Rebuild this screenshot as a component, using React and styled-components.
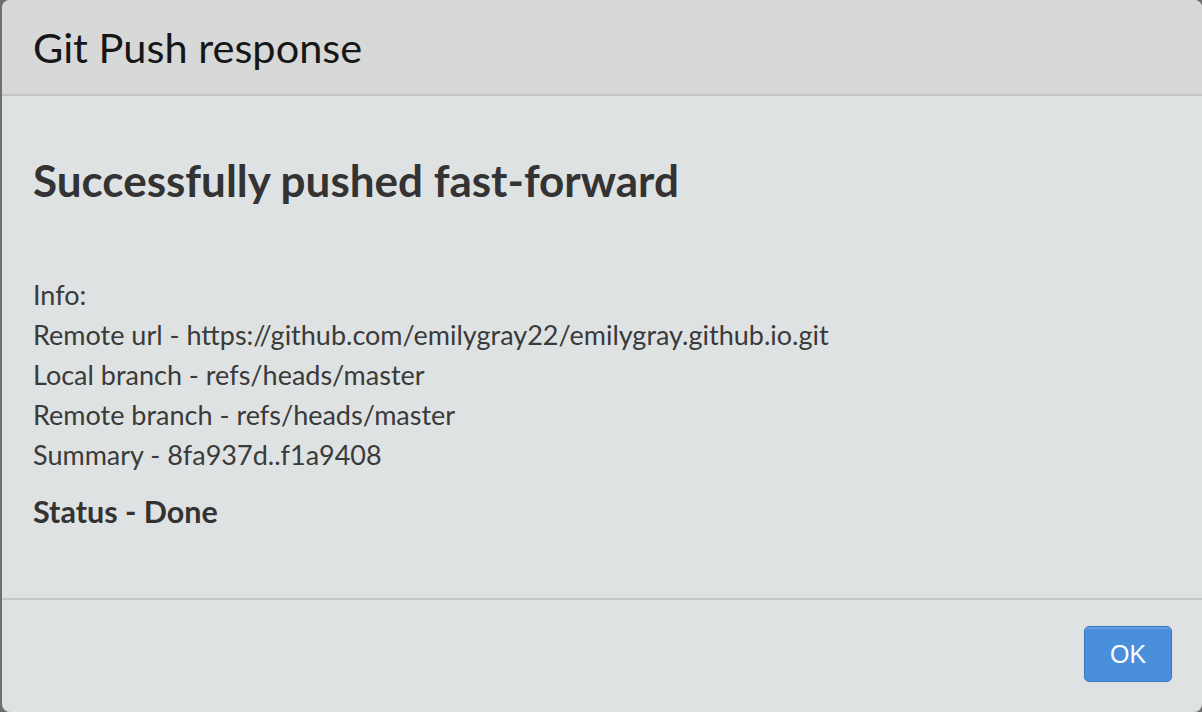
import React from "react";
import styled, { createGlobalStyle } from "styled-components";

const GlobalStyle = createGlobalStyle`
html, body {
  margin: 0;
  padding: 0;
  background: #6f6f72;
}
body {
  font-family: Lato, "Open Sans", "Liberation Sans", sans-serif;
  overflow: hidden;
}
`;

const Backdrop = styled.div`
width: 1202px;
height: 712px;
padding-left: 2px;
box-sizing: border-box;
`;

const Modal = styled.div`
height: 712px;
display: flex;
flex-direction: column;
background: #dfe2e3;
border-radius: 8px;
overflow: hidden;
`;

const Header = styled.div`
height: 94px;
display: flex;
align-items: center;
padding: 0 31px;
background: #d7d8d8;
border-bottom: 2px solid #c5c6c7;
`;

const Title = styled.h3`
margin: 0;
font-size: 41.5px;
font-weight: 400;
color: #161616;
`;

const Body = styled.div`
flex: 1;
padding: 0 31px;
color: #333;
`;

const Heading = styled.h2`
margin: 60px 0 0;
font-size: 44px;
font-weight: 700;
line-height: 48px;
color: #333;
`;

const InfoList = styled.div`
margin-top: 71px;
display: flex;
flex-direction: column;
`;

const InfoLine = styled.div`
font-size: 27px;
line-height: 40px;
color: #3a3a3a;
`;

const Status = styled.div`
margin-top: 16px;
font-size: 30.5px;
font-weight: 700;
line-height: 40px;
color: #333;
`;

const Footer = styled.div`
height: 114px;
box-sizing: border-box;
display: flex;
align-items: flex-start;
justify-content: flex-end;
padding: 26px 30px 0;
border-top: 2px solid #c5c6c7;
`;

const Button = styled.button`
width: 88px;
height: 56px;
border-radius: 5px;
border: 1.5px solid #3b78be;
background: #4a8fdb;
box-shadow: inset 0 2px 0 rgba(255, 255, 255, 0.15);
color: #fff;
font-family: "Liberation Sans", Arial, sans-serif;
font-size: 25px;
font-weight: 400;
cursor: pointer;
`;

const info = [
  "Info:",
  "Remote url - https://github.com/emilygray22/emilygray.github.io.git",
  "Local branch - refs/heads/master",
  "Remote branch - refs/heads/master",
  "Summary - 8fa937d..f1a9408",
];

export default function App() {
  return (
    <Backdrop>
      <GlobalStyle />
      <Modal>
        <Header>
          <Title>Git Push response</Title>
        </Header>
        <Body>
          <Heading>Successfully pushed fast-forward</Heading>
          <InfoList>
            {info.map((line) => (
              <InfoLine key={line}>{line}</InfoLine>
            ))}
          </InfoList>
          <Status>Status - Done</Status>
        </Body>
        <Footer>
          <Button>OK</Button>
        </Footer>
      </Modal>
    </Backdrop>
  );
}
